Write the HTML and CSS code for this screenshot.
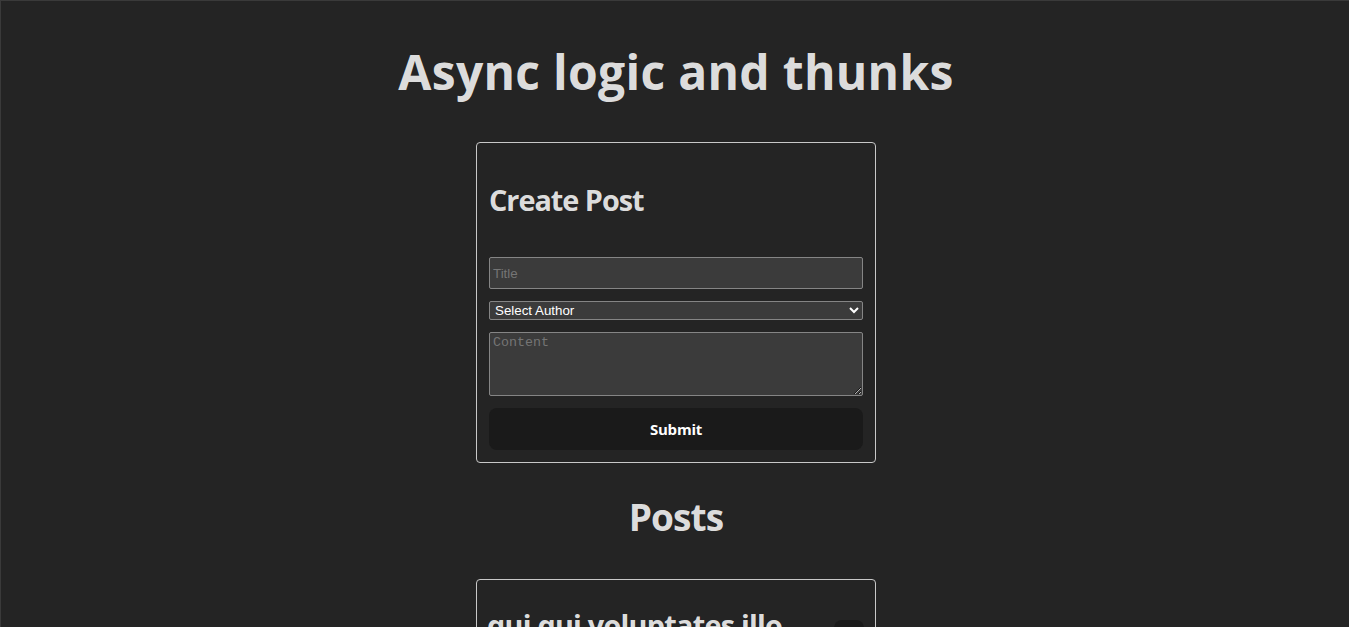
FILE: index.html
```html
<!DOCTYPE html>
<html lang="en">
<head>
<meta charset="utf-8">
<title>Async logic and thunks</title>
<link rel="stylesheet" href="styles.css">
</head>
<body>
  <div class="app">
    <h1 class="page-title">Async logic and thunks</h1>
    <section class="card create-card">
      <h2 class="card-title">Create Post</h2>
      <form class="post-form">
        <input class="field field-input" type="text" placeholder="Title">
        <select class="field field-select">
          <option>Select Author</option>
        </select>
        <textarea class="field field-area" placeholder="Content"></textarea>
        <button class="btn btn-submit" type="button">Submit</button>
      </form>
    </section>
    <h2 class="section-title">Posts</h2>
    <article class="card post-card">
      <div class="post-head">
        <h3 class="post-title">qui qui voluptates illo iste minima</h3>
        <button class="btn btn-small" type="button" aria-label="View post"></button>
      </div>
    </article>
  </div>
</body>
</html>
```
FILE: styles.css
```css
:root {
  color-scheme: dark;
  font-family: "Open Sans", "Noto Sans", sans-serif;
  color: rgba(255, 255, 255, 0.87);
  background-color: #242424;
}

html, body {
  height: 100%;
}

body {
  margin: 0;
  background: #242424;
  border-top: 1px solid #3a3a3a;
  border-left: 1px solid #3a3a3a;
  box-sizing: border-box;
  overflow: hidden;
}

.app {
  display: flex;
  flex-direction: column;
  align-items: center;
  padding-top: 43px;
  padding-left: 2px;
}

.page-title {
  margin: 0;
  font-size: 48px;
  line-height: 56px;
  font-weight: 700;
  letter-spacing: 0.3px;
}

.card {
  width: 400px;
  box-sizing: border-box;
  border: 1px solid #c8c8c8;
  border-radius: 4px;
}

.create-card {
  margin-top: 42px;
  padding: 12px;
}

.card-title {
  margin: 25px 0 37px;
  font-size: 28.8px;
  line-height: 40px;
  font-weight: 700;
  letter-spacing: -1px;
}

.post-form {
  display: flex;
  flex-direction: column;
  gap: 12px;
}

.field {
  box-sizing: border-box;
  width: 100%;
  margin: 0;
  background: #3b3b3b;
  border: 1px solid #858585;
  border-radius: 2px;
  color: #ffffff;
  font-family: "Liberation Sans", Arial, sans-serif;
  font-size: 13.33px;
}

.field-input {
  height: 32px;
  padding: 1px 3px;
}

.field-select {
  height: 19px;
  padding: 0 0 0 1px;
}

.field-area {
  height: 64px;
  padding: 2px 3px;
  font-family: "Liberation Mono", "DejaVu Sans Mono", monospace;
  resize: vertical;
}

.field::placeholder {
  color: #757575;
}

.btn {
  border: 1px solid transparent;
  border-radius: 8px;
  background: #1a1a1a;
  color: #ffffff;
  font-family: "Open Sans", sans-serif;
  font-weight: 700;
  cursor: pointer;
}

.btn-submit {
  height: 42px;
  font-size: 15px;
  letter-spacing: -0.2px;
}

.section-title {
  margin: 30px 0 38px;
  font-size: 37px;
  line-height: 48px;
  font-weight: 700;
  letter-spacing: -0.9px;
}

.post-card {
  padding: 0 11px 12px 10px;
}

.post-head {
  display: flex;
  align-items: flex-start;
  justify-content: space-between;
  gap: 12px;
}

.post-title {
  margin: 25px 0 0;
  font-size: 28.8px;
  line-height: 40px;
  font-weight: 700;
  letter-spacing: -0.75px;
}

.btn-small {
  margin-top: 40px;
  height: 36px;
  width: 30px;
  flex-shrink: 0;
  padding: 0;
}
```
